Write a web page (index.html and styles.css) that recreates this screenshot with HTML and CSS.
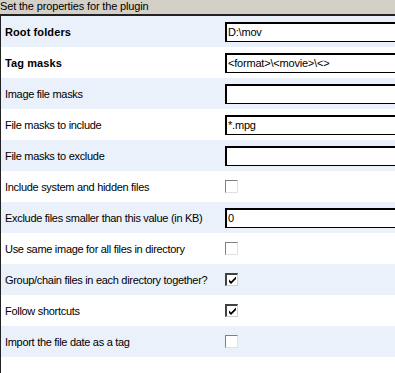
FILE: index.html
```html
<!DOCTYPE html>
<html>
<head>
<meta charset="utf-8">
<link rel="stylesheet" href="styles.css">
</head>
<body>
<div class="title">Set the properties for the plugin</div>
<div class="panel">
  <div class="row alt"><div class="label bold">Root folders</div><div class="value"><div class="field">D:\mov</div></div></div>
  <div class="row"><div class="label bold">Tag masks</div><div class="value"><div class="field">&lt;format&gt;\&lt;movie&gt;\&lt;&gt;</div></div></div>
  <div class="row alt"><div class="label">Image file masks</div><div class="value"><div class="field"></div></div></div>
  <div class="row"><div class="label">File masks to include</div><div class="value"><div class="field">*.mpg</div></div></div>
  <div class="row alt"><div class="label">File masks to exclude</div><div class="value"><div class="field"></div></div></div>
  <div class="row"><div class="label">Include system and hidden files</div><div class="value"><span class="check"></span></div></div>
  <div class="row alt"><div class="label">Exclude files smaller than this value (in KB)</div><div class="value"><div class="field">0</div></div></div>
  <div class="row"><div class="label">Use same image for all files in directory</div><div class="value"><span class="check"></span></div></div>
  <div class="row alt"><div class="label">Group/chain files in each directory together?</div><div class="value"><span class="check on"><svg width="9" height="9" viewBox="0 0 9 9"><path d="M1 3.5 L3 5.5 L8 0.5 L8 3 L3 8 L1 6 Z" fill="#000"/></svg></span></div></div>
  <div class="row"><div class="label">Follow shortcuts</div><div class="value"><span class="check on"><svg width="9" height="9" viewBox="0 0 9 9"><path d="M1 3.5 L3 5.5 L8 0.5 L8 3 L3 8 L1 6 Z" fill="#000"/></svg></span></div></div>
  <div class="row alt"><div class="label">Import the file date as a tag</div><div class="value"><span class="check"></span></div></div>
</div>
</body>
</html>
```
FILE: styles.css
```css
html, body {
  margin: 0;
  padding: 0;
  background: #fff;
  font-family: "Liberation Sans", Arial, sans-serif;
  font-size: 11px;
  color: #000;
  overflow: hidden;
  height: 100%;
}
body {
  display: flex;
  flex-direction: column;
}
.title {
  height: 14px;
  line-height: 13px;
  background: #d4d0c8;
  letter-spacing: -0.15px;
  white-space: nowrap;
}
.panel {
  flex: 1;
  min-height: 0;
  border-top: 2px solid #222;
  border-left: 1px solid #222;
  background: #fff;
  overflow: hidden;
}
.row {
  display: grid;
  grid-template-columns: 224px 1fr;
  height: 31px;
  align-items: center;
  overflow: hidden;
}
.row.alt {
  background: #eaf1fb;
}
.label {
  padding-left: 4px;
  white-space: nowrap;
  overflow: hidden;
  letter-spacing: -0.3px;
}
.label.bold {
  font-weight: bold;
  letter-spacing: 0.1px;
}
.value {
  display: flex;
  align-items: center;
  min-width: 0;
}
.field {
  box-sizing: border-box;
  flex: none;
  height: 20px;
  width: calc(100% + 20px);
  border: 1px solid #000;
  border-top-width: 2px;
  border-left-width: 2px;
  background: #fff;
  padding-left: 1px;
  line-height: 16px;
  white-space: nowrap;
  letter-spacing: -0.2px;
}
.check {
  box-sizing: border-box;
  width: 13px;
  height: 13px;
  border-top: 1px solid #808080;
  border-left: 1px solid #808080;
  border-right: 1px solid #e0e0e0;
  border-bottom: 1px solid #e0e0e0;
  background: #fff;
  display: flex;
  align-items: center;
  justify-content: center;
}
.check.on {
  border-top: 2px solid #404040;
  border-left: 2px solid #404040;
  border-right: 1px solid #d0d0d0;
  border-bottom: 1px solid #d0d0d0;
}
```
